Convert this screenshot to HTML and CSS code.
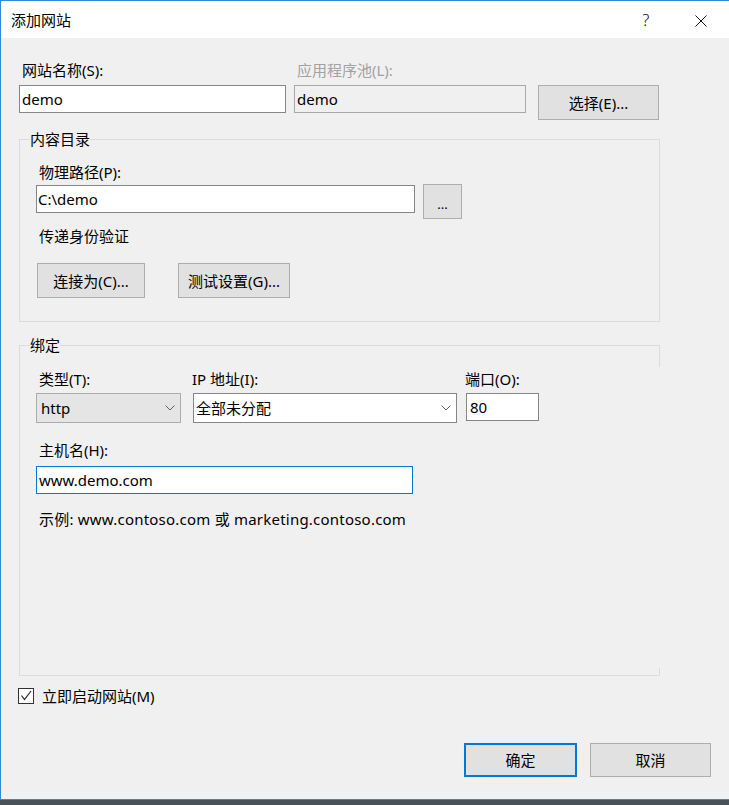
FILE: index.html
```html
<!DOCTYPE html>
<html lang="zh-CN">
<head>
<meta charset="utf-8">
<title>添加网站</title>
<link rel="stylesheet" href="styles.css">
</head>
<body>
<div class="window">
  <div class="titlebar">
    <span class="title">添加网站</span>
    <span class="tb-help">?</span>
    <span class="tb-close"><svg width="12" height="12" viewBox="0 0 12 12"><path d="M0.5 0.5 L11.5 11.5 M11.5 0.5 L0.5 11.5" stroke="#111" stroke-width="1" fill="none"/></svg></span>
  </div>
  <div class="content">
    <div class="row-top">
      <div class="field f-name">
        <div class="lbl">网站名称(S):</div>
        <div class="input">demo</div>
      </div>
      <div class="field f-pool">
        <div class="lbl disabled">应用程序池(L):</div>
        <div class="input input-readonly">demo</div>
      </div>
      <div class="btn btn-select">选择(E)...</div>
    </div>

    <fieldset class="group group-content">
      <legend>内容目录</legend>
      <div class="group-body body-content">
        <div class="lbl">物理路径(P):</div>
        <div class="path-row">
          <div class="input input-path">C:\demo</div>
          <div class="btn btn-browse">...</div>
        </div>
        <div class="lbl pass">传递身份验证</div>
        <div class="btn-row">
          <div class="btn btn-connect">连接为(C)...</div>
          <div class="btn btn-test">测试设置(G)...</div>
        </div>
      </div>
    </fieldset>

    <fieldset class="group group-binding">
      <legend>绑定</legend>
      <div class="group-body body-binding">
        <div class="bind-row">
          <div class="field f-type">
            <div class="lbl">类型(T):</div>
            <div class="select select-disabled"><span>http</span><svg class="chev" width="10" height="6" viewBox="0 0 10 6"><polyline points="0.5,0.5 5,5 9.5,0.5" fill="none" stroke="#606060" stroke-width="1"/></svg></div>
          </div>
          <div class="field f-ip">
            <div class="lbl lbl-tight">IP 地址(I):</div>
            <div class="select"><span>全部未分配</span><svg class="chev" width="10" height="6" viewBox="0 0 10 6"><polyline points="0.5,0.5 5,5 9.5,0.5" fill="none" stroke="#606060" stroke-width="1"/></svg></div>
          </div>
          <div class="field f-port">
            <div class="lbl lbl-tight">端口(O):</div>
            <div class="input input-port">80</div>
          </div>
        </div>
        <div class="lbl host-lbl">主机名(H):</div>
        <div class="input input-host">www.demo.com</div>
        <div class="lbl example">示例: www.contoso.com 或 marketing.contoso.com</div>
      </div>
    </fieldset>

    <div class="check-row">
      <span class="checkbox"><svg width="14" height="14" viewBox="0 0 14 14"><polyline points="2.5,6.5 5.5,10.5 12,2" fill="none" stroke="#222" stroke-width="1.2"/></svg></span>
      <span class="check-lbl">立即启动网站(M)</span>
    </div>

    <div class="dialog-buttons">
      <div class="btn btn-ok">确定</div>
      <div class="btn btn-cancel">取消</div>
    </div>
  </div>
</div>
</body>
</html>
```

FILE: styles.css
```css
* { box-sizing: border-box; }

html, body {
  margin: 0;
  padding: 0;
}

body {
  width: 729px;
  height: 805px;
  overflow: hidden;
  background: #4a5259;
  font-family: "Noto Sans", "Noto Sans CJK SC", sans-serif;
  font-size: 15px;
  line-height: 20px;
  color: #000;
}

.window {
  height: 800px;
  border-top: 1px solid #2f87e0;
  border-left: 1px solid #2f87e0;
  border-bottom: 1px solid #2f87e0;
  background: #f0f0f0;
  display: flex;
  flex-direction: column;
}

.titlebar {
  height: 37px;
  flex: none;
  background: #fff;
  display: flex;
  align-items: center;
  padding: 0 22px 0 10px;
}

.title { flex: 1; }

.tb-help {
  width: 14px;
  text-align: center;
  margin-right: 42px;
  font-size: 16px;
  font-weight: 300;
}

.tb-close {
  display: flex;
  width: 12px;
  height: 12px;
  margin-top: 2px;
}

.content {
  flex: 1;
  overflow: hidden;
  padding: 22px 0 0 18px;
}

/* top row */
.row-top {
  display: flex;
  align-items: flex-start;
}

.field { display: flex; flex-direction: column; }

.lbl {
  height: 20px;
  line-height: 20px;
  padding-left: 3px;
  white-space: nowrap;
}

.lbl.disabled { color: #a2a2a2; }
.lbl-tight { padding-left: 0; margin-left: -1px; }

.f-name { width: 267px; }
.f-pool { width: 232px; margin-left: 8px; }

.input {
  height: 28px;
  line-height: 26px;
  border: 1px solid #868686;
  background: #fff;
  padding: 0 2px;
  white-space: nowrap;
}

.f-name .input, .f-pool .input { margin-top: 5px; }

.input-readonly { background: #f0f0f0; border-color: #a8a8a8; }

.btn {
  display: flex;
  align-items: center;
  justify-content: center;
  background: #e1e1e1;
  border: 1px solid #adadad;
  white-space: nowrap;
}

.btn-select {
  width: 121px;
  height: 35px;
  margin: 25px 0 0 12px;
}

/* group boxes */
.group {
  margin: 0;
  padding: 0;
  width: 641px;
  border: 1px solid #dcdcdc;
  min-width: 0;
}

.group legend {
  margin-left: 10px;
  padding: 0;
  line-height: 20px;
  height: 20px;
}

.group-content { margin-top: 9px; }
.group-binding { margin-top: 13px; border-right-color: transparent; }

.group-body {
  position: relative;
  padding-left: 16px;
}

.body-content { padding-top: 13px; padding-bottom: 23px; }

.path-row {
  display: flex;
  align-items: flex-start;
  margin-top: 3px;
}

.input-path { width: 379px; padding-left: 1px; }

.btn-browse {
  width: 39px;
  height: 35px;
  margin: -1px 0 0 8px;
  font-size: 13px;
  padding-top: 4px;
}

.pass { margin-top: 7px; }

.btn-row {
  display: flex;
  margin-top: 17px;
}

.btn-connect { width: 108px; height: 35px; margin-left: 1px; }
.btn-test { width: 112px; height: 35px; margin-left: 33px; }

/* binding */
.body-binding { padding-top: 14px; padding-bottom: 146px; }

.body-binding::before,
.body-binding::after {
  content: "";
  position: absolute;
  right: -1px;
  width: 1px;
  background: #dcdcdc;
}

.body-binding::before { top: -10px; height: 22px; }
.body-binding::after { bottom: 0; height: 7px; }

.bind-row { display: flex; align-items: flex-start; }

.f-type { width: 145px; }
.f-ip { width: 264px; margin-left: 12px; }
.f-port { width: 73px; margin-left: 9px; }

.select {
  margin-top: 4px;
  height: 30px;
  border: 1px solid #868686;
  background: #fff;
  display: flex;
  align-items: center;
  justify-content: space-between;
  padding: 0 5px 0 2px;
  white-space: nowrap;
}

.select-disabled {
  background: #e5e5e5;
  border-color: #acacac;
  padding-left: 4px;
}

.chev { flex: none; }

.input-port { margin-top: 4px; padding-left: 3px; }

.host-lbl { margin-top: 17px; }

.input-host {
  width: 377px;
  margin-top: 6px;
  border-color: #0078d7;
  padding-left: 2px;
}

.example { margin-top: 15px; letter-spacing: 0.22px; }

/* checkbox */
.check-row {
  display: flex;
  align-items: center;
  height: 16px;
  margin-top: 12px;
  margin-left: -1px;
}

.checkbox {
  width: 16px;
  height: 16px;
  border: 1px solid #333;
  background: #fff;
  display: flex;
  align-items: center;
  justify-content: center;
}

.check-lbl { margin-left: 8px; }

/* dialog buttons */
.dialog-buttons {
  display: flex;
  justify-content: flex-end;
  margin-top: 39px;
  padding-right: 18px;
}

.btn-ok {
  width: 113px;
  height: 34px;
  border: 2px solid #0078d7;
}

.btn-cancel {
  width: 121px;
  height: 34px;
  margin-left: 13px;
}
```
